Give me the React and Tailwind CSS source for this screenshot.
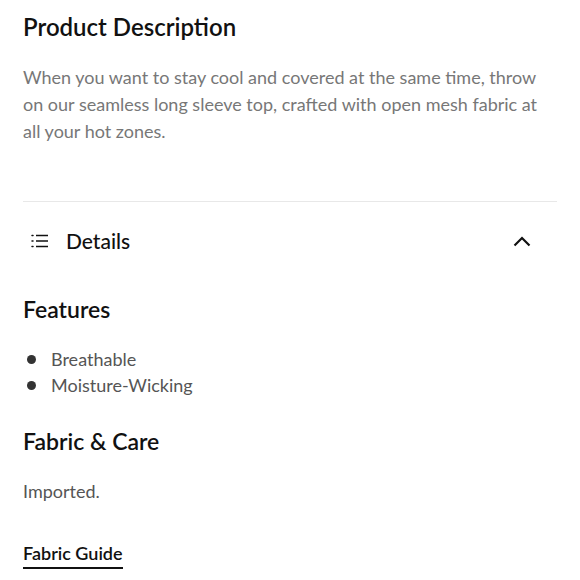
const features = ["Breathable", "Moisture-Wicking"];

function ListIcon() {
  return (
    <svg width="18" height="14" viewBox="0 0 18 14" fill="none" stroke="#111" strokeWidth="1.5">
      <path d="M1 1.5h1M1 7h1M1 12.5h1" strokeLinecap="round" />
      <path d="M5 1.5h12M5 7h12M5 12.5h12" />
    </svg>
  );
}

function Chevron() {
  return (
    <svg width="18" height="11" viewBox="0 0 18 11" fill="none" stroke="#111" strokeWidth="2.2">
      <path d="M1.5 9.5L9 2l7.5 7.5" />
    </svg>
  );
}

export default function App() {
  return (
    <div
      className="w-[580px] h-[580px] overflow-hidden bg-white px-[23px] text-[#111]"
      style={{ fontFamily: "Lato, 'Noto Sans', sans-serif" }}
    >
      <h2 className="pt-[10px] text-[24px] leading-[34px] font-semibold">Product Description</h2>
      <p className="mt-[20px] text-[18px] leading-[27px] text-[#777]">
        When you want to stay cool and covered at the same time, throw on our seamless long sleeve top, crafted with open mesh fabric at all your hot zones.
      </p>

      <div className="mt-[56px] border-t border-[#e8e8e8]" />

      <div className="flex items-center justify-between h-[78px] pl-[8px] pr-[26px]">
        <div className="flex items-center gap-[17px]">
          <ListIcon />
          <span className="text-[21px] font-medium">Details</span>
        </div>
        <Chevron />
      </div>

      <h3 className="mt-[14px] text-[23px] leading-[30px] font-semibold">Features</h3>
      <ul className="mt-[22px]">
        {features.map((f) => (
          <li key={f} className="flex items-center h-[26px] text-[18px] text-[#555]">
            <span className="ml-[4px] mr-[15px] w-[9px] h-[9px] rounded-full bg-[#333]" />
            {f}
          </li>
        ))}
      </ul>

      <h3 className="mt-[28px] text-[23px] leading-[30px] font-semibold">Fabric &amp; Care</h3>
      <p className="mt-[22px] text-[18px] leading-[27px] text-[#555]">Imported.</p>

      <a className="mt-[36px] inline-block text-[18px] leading-[24px] font-semibold border-b-2 border-[#111] pb-[2px]">
        Fabric Guide
      </a>
    </div>
  );
}
